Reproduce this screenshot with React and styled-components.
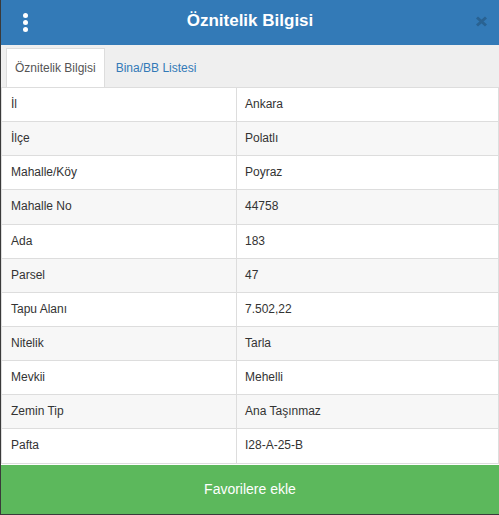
import React from "react";
import styled, { createGlobalStyle } from "styled-components";

const Global = createGlobalStyle`
  html, body {
    margin: 0;
    padding: 0;
    background: #3a3a3a;
  }
  body {
    font-family: "Liberation Sans", Arial, sans-serif;
  }
`;

const Panel = styled.div`
  margin-left: 1px;
  width: 498px;
  height: 514px;
  background: #fff;
  display: flex;
  flex-direction: column;
  overflow: hidden;
`;

const Header = styled.div`
  height: 45px;
  flex: none;
  background: #337ab7;
  display: grid;
  grid-template-columns: 48px 1fr 48px;
  align-items: center;
`;

const Kebab = styled.div`
  display: flex;
  flex-direction: column;
  align-items: center;
  gap: 2px;
  margin-top: -1px;

  span {
    width: 5px;
    height: 5px;
    border-radius: 50%;
    background: #fff;
  }
`;

const Title = styled.h1`
  margin: 0;
  text-align: center;
  color: #fff;
  font-size: 17px;
  font-weight: bold;
  margin-top: -4px;
`;

const Close = styled.div`
  display: flex;
  justify-content: center;
  margin-top: -2px;
  margin-left: 12px;
`;

const TabBar = styled.div`
  flex: none;
  height: 42px;
  background: #efefef;
  display: flex;
  align-items: flex-end;
  padding-left: 5px;
  box-sizing: border-box;
`;

const Tab = styled.div`
  height: 39px;
  box-sizing: border-box;
  padding: 0 8px;
  display: flex;
  align-items: center;
  font-size: 12px;
  color: ${(p) => (p.$active ? "#555" : "#337ab7")};
  background: ${(p) => (p.$active ? "#fff" : "transparent")};
  border: 1px solid ${(p) => (p.$active ? "#ddd" : "transparent")};
  border-bottom: none;
  margin-right: 2px;
`;

const Table = styled.table`
  width: 100%;
  border-collapse: collapse;
  font-size: 12px;
  color: #333;
  flex: none;
`;

const Row = styled.tr`
  background: ${(p) => (p.$striped ? "#f7f7f7" : "#fff")};
`;

const Cell = styled.td`
  border: 1px solid #ddd;
  padding: 8px 8px;
  line-height: 1.42857;
  width: ${(p) => p.$w || "auto"};

  &:first-child {
    padding-left: 9px;
  }
`;

const AddButton = styled.button`
  flex: 1;
  margin-top: 1px;
  border: none;
  background: #5cb85c;
  color: #fff;
  font-family: "Liberation Sans", Arial, sans-serif;
  font-size: 14px;
  cursor: pointer;
`;

const rows = [
  ["İl", "Ankara"],
  ["İlçe", "Polatlı"],
  ["Mahalle/Köy", "Poyraz"],
  ["Mahalle No", "44758"],
  ["Ada", "183"],
  ["Parsel", "47"],
  ["Tapu Alanı", "7.502,22"],
  ["Nitelik", "Tarla"],
  ["Mevkii", "Mehelli"],
  ["Zemin Tip", "Ana Taşınmaz"],
  ["Pafta", "I28-A-25-B"],
];

export default function App() {
  return (
    <>
      <Global />
      <Panel>
        <Header>
          <Kebab>
            <span />
            <span />
            <span />
          </Kebab>
          <Title>Öznitelik Bilgisi</Title>
          <Close>
            <svg width="13" height="11" viewBox="0 0 13 11">
              <path
                d="M2 1.5 L11 9.5 M11 1.5 L2 9.5"
                stroke="#296292"
                strokeWidth="3"
              />
            </svg>
          </Close>
        </Header>
        <TabBar>
          <Tab $active>Öznitelik Bilgisi</Tab>
          <Tab>Bina/BB Listesi</Tab>
        </TabBar>
        <Table>
          <tbody>
            {rows.map(([k, v], i) => (
              <Row key={k} $striped={i % 2 === 1}>
                <Cell $w="217px">{k}</Cell>
                <Cell>{v}</Cell>
              </Row>
            ))}
          </tbody>
        </Table>
        <AddButton>Favorilere ekle</AddButton>
      </Panel>
    </>
  );
}
